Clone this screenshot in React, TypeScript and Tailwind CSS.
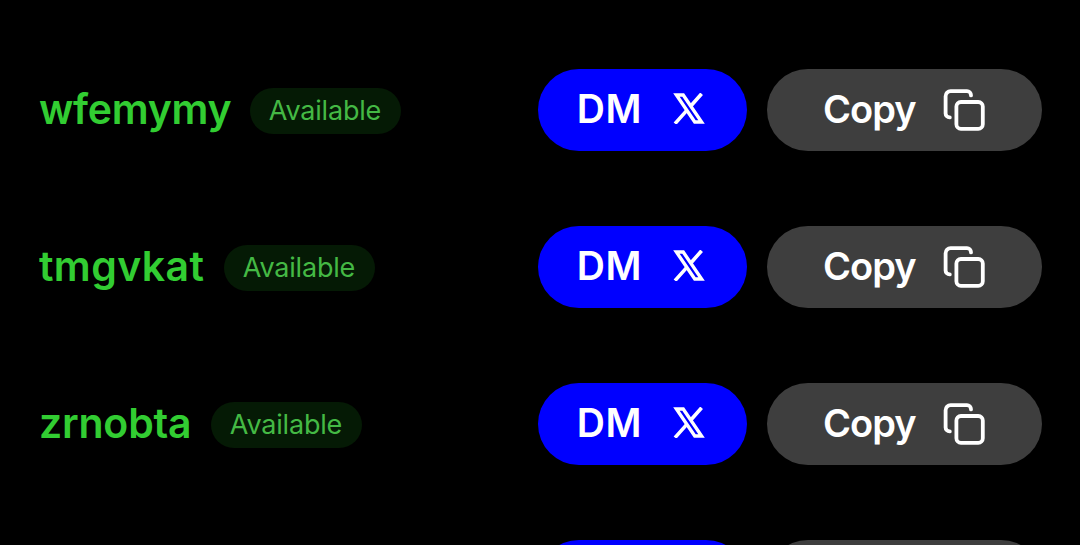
type Entry = {
  name: string
  nameClass: string
}

const entries: Entry[] = [
  { name: 'wfemymy', nameClass: 'w-[211px] tracking-[-0.3px]' },
  { name: 'tmgvkat', nameClass: 'w-[185px] tracking-[0.4px]' },
  { name: 'zrnobta', nameClass: 'w-[172px] tracking-[-0.2px]' },
]

function XLogo() {
  return (
    <svg className="ml-[30px] mb-1 h-[31px] w-8 shrink-0" viewBox="0 0 32 31" fill="none" aria-hidden="true">
      <path d="M3.4 2h6.8l18.4 27h-6.8L3.4 2Z" stroke="currentColor" strokeWidth="3.4" />
      <path d="M28.6 .7 17.6 13.3M13.6 17.6 2 30.6" stroke="currentColor" strokeWidth="3.6" />
    </svg>
  )
}

function CopyIcon() {
  return (
    <svg
      className="ml-7 h-[42px] w-[42px] shrink-0"
      viewBox="0 0 42 42"
      fill="none"
      stroke="currentColor"
      strokeWidth="3.8"
      strokeLinecap="round"
      aria-hidden="true"
    >
      <rect x="13.4" y="13" width="26.4" height="26.8" rx="4.5" />
      <path d="M28 6.4V6.2a4 4 0 0 0-4-4H7.6a5 5 0 0 0-5 5v17.2a4 4 0 0 0 4 4h.2" />
    </svg>
  )
}

function Row({ name, nameClass }: Entry) {
  return (
    <div className="flex h-[82.4px] shrink-0 items-center">
      <span className={`${nameClass} mb-px shrink-0 whitespace-nowrap text-[41px] leading-none font-semibold text-[#32cd32]`}>
        {name}
      </span>
      <span className="mt-0.5 flex h-[46px] w-[151px] shrink-0 items-center justify-center rounded-full bg-[#051a05] pt-px pr-[1px] text-[27px] tracking-[-0.2px] text-[#44b944]">
        Available
      </span>
      <div className="ml-auto flex h-full gap-5 text-[38px] leading-none font-semibold text-white">
        <button className="flex h-full w-[209px] items-center rounded-full bg-[#0000ff] pl-[37px]">
          <span className="mb-[3px] w-[68px] indent-px text-[39px] tracking-[0.6px]">DM</span>
          <XLogo />
        </button>
        <button className="flex h-full w-[275px] items-center rounded-full bg-[#3e3e3e] pl-[55px]">
          <span className="mb-0.5 w-[93px] indent-px tracking-[-1px]">Copy</span>
          <CopyIcon />
        </button>
      </div>
    </div>
  )
}

export default function App() {
  return (
    <main className="flex h-[545px] w-[1080px] flex-col gap-[74.6px] overflow-hidden bg-black pt-[69px] pr-[38px] pl-[39px] font-['Inter','Liberation_Sans',sans-serif]">
      {entries.map((entry) => (
        <Row key={entry.name} {...entry} />
      ))}
      {/* next row, only its top edge is in view */}
      <div className="flex h-[82.4px] shrink-0 justify-end gap-5">
        <div className="w-[209px] rounded-full bg-[#0000ff]" />
        <div className="w-[275px] rounded-full bg-[#3e3e3e]" />
      </div>
    </main>
  )
}
